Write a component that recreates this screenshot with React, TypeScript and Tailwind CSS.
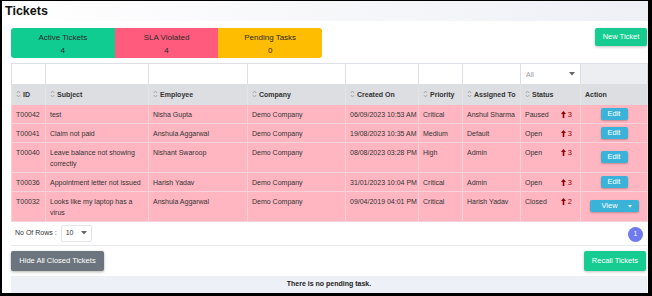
import { ReactNode } from "react";

const font = { fontFamily: '"Liberation Sans", Arial, sans-serif' };

type Row = {
  id: string;
  subject: string;
  employee: string;
  company: string;
  created: string;
  priority: string;
  assigned: string;
  status: string;
  level: number;
  view?: boolean;
};

const rows: Row[] = [
  { id: "T00042", subject: "test", employee: "Nisha Gupta", company: "Demo Company", created: "06/09/2023 10:53 AM", priority: "Critical", assigned: "Anshul Sharma", status: "Paused", level: 3 },
  { id: "T00041", subject: "Claim not paid", employee: "Anshula Aggarwal", company: "Demo Company", created: "19/08/2023 10:35 AM", priority: "Medium", assigned: "Default", status: "Open", level: 3 },
  { id: "T00040", subject: "Leave balance not showing correctly", employee: "Nishant Swaroop", company: "Demo Company", created: "08/08/2023 03:28 PM", priority: "High", assigned: "Admin", status: "Open", level: 3 },
  { id: "T00036", subject: "Appointment letter not issued", employee: "Harish Yadav", company: "Demo Company", created: "31/01/2023 10:04 PM", priority: "Critical", assigned: "Admin", status: "Open", level: 3 },
  { id: "T00032", subject: "Looks like my laptop has a virus", employee: "Anshula Aggarwal", company: "Demo Company", created: "09/04/2019 04:01 PM", priority: "Critical", assigned: "Harish Yadav", status: "Closed", level: 2, view: true },
];

const widths = [34, 103, 99, 98, 73, 44, 58, 60, 67];
const heads = ["ID", "Subject", "Employee", "Company", "Created On", "Priority", "Assigned To", "Status"];

function SortIcon() {
  return (
    <svg width="5" height="8" viewBox="0 0 5 8" className="mr-[2px] inline-block align-[-1px]">
      <path d="M0.8 3 L2.5 1 L4.2 3 M0.8 5 L2.5 7 L4.2 5" fill="none" stroke="#9a9a9a" strokeWidth="0.8" />
    </svg>
  );
}

function Caret() {
  return (
    <svg width="6" height="4" viewBox="0 0 6 4">
      <path d="M0 0 L6 0 L3 3.5 Z" fill="#666" />
    </svg>
  );
}

function UpArrow() {
  return (
    <svg width="5" height="7" viewBox="0 0 5 7" className="mr-[2px] inline-block align-[-1px]">
      <path d="M2.5 0 L5 3 L3.3 3 L3.3 7 L1.7 7 L1.7 3 L0 3 Z" fill="#8b0000" />
    </svg>
  );
}

function Td({ children, className = "" }: { children?: ReactNode; className?: string }) {
  return <td className={`border-x border-b border-[#f7d3d9] px-[4px] pt-[4px] pb-[3px] align-top ${className}`}>{children}</td>;
}

function Stat({ label, value, color }: { label: string; value: string; color: string }) {
  return (
    <div className={`flex flex-1 flex-col items-center justify-center gap-[2px] pt-[1px] ${color}`}>
      <span>{label}</span>
      <span>{value}</span>
    </div>
  );
}

export default function App() {
  return (
    <div style={font} className="h-[296px] w-[652px] overflow-hidden border-t border-l-2 border-r-4 border-b-[3px] border-black bg-white text-[#333]">
      <div className="flex h-[20px] items-center bg-gradient-to-r from-white to-[#eff0f6] pl-[3px]">
        <h1 className="text-[12.5px] font-bold leading-none text-[#111]">Tickets</h1>
      </div>
      <div className="pl-[9px] pr-[1px] pt-[7px]">
        <div className="flex items-start justify-between">
          <div className="flex h-[30px] w-[311px] overflow-hidden rounded-[3px] text-[8px] leading-[11px] text-[#2a2a2a]">
            <Stat label="Active Tickets" value="4" color="bg-[#10cc91]" />
            <Stat label="SLA Violated" value="4" color="bg-[#ff5b7c]" />
            <Stat label="Pending Tasks" value="0" color="bg-[#ffbd02]" />
          </div>
          <button className="h-[18px] w-[52px] rounded-[2px] bg-[#17cc90] text-[7.5px] text-white shadow-[0_1px_3px_rgba(0,0,0,0.25)]">New Ticket</button>
        </div>

        <table className="mt-[5px] w-[636px] table-fixed border-collapse text-[7px] leading-[11px]">
          <colgroup>
            {widths.map((w, i) => (
              <col key={i} style={{ width: w }} />
            ))}
          </colgroup>
          <thead>
            <tr className="h-[21px]">
              {widths.slice(0, 7).map((_, i) => (
                <th key={i} className="border border-[#dcdfe3] bg-white p-0" />
              ))}
              <th className="border border-[#dcdfe3] bg-white px-[5px] py-0 text-left font-normal">
                <div className="flex items-center justify-between text-[#999]">
                  <span>All</span>
                  <Caret />
                </div>
              </th>
              <th className="border border-[#dcdfe3] bg-[#eceef2] p-0" />
            </tr>
            <tr className="h-[20px] bg-[#dcdee2]">
              {heads.map((h) => (
                <th key={h} className="border-x border-[#e2e4e7] px-[4px] py-0 text-left font-bold text-[#333]">
                  <span className="whitespace-nowrap">
                    <SortIcon />
                    {h}
                  </span>
                </th>
              ))}
              <th className="border-x border-[#e2e4e7] px-[4px] py-0 text-left font-bold">Action</th>
            </tr>
          </thead>
          <tbody className="bg-[#ffb6c1]">
            {rows.map((r) => (
              <tr key={r.id}>
                <Td>{r.id}</Td>
                <Td>{r.subject}</Td>
                <Td>{r.employee}</Td>
                <Td>{r.company}</Td>
                <Td className="whitespace-nowrap">{r.created}</Td>
                <Td>{r.priority}</Td>
                <Td className="whitespace-nowrap">{r.assigned}</Td>
                <Td>
                  <span className="float-right pr-[4px] text-[7.5px] text-[#a00000]">
                    <UpArrow />
                    {r.level}
                  </span>
                  {r.status}
                </Td>
                <td className="border-x border-b border-[#f7d3d9] p-0 text-center align-middle leading-none">
                  {r.view ? (
                    <button className="inline-flex h-[12px] w-[49px] items-center justify-between rounded-[2px] bg-[#3bb3d8] pl-[12px] pr-[7px] text-[7.5px] text-white shadow-[0_1px_2px_rgba(0,0,0,0.25)]">
                      <span>View</span>
                      <svg width="4" height="3" viewBox="0 0 4 3">
                        <path d="M0 0 L4 0 L2 2.5 Z" fill="#fff" />
                      </svg>
                    </button>
                  ) : (
                    <button className="inline-block h-[12px] w-[27px] rounded-[2px] bg-[#3bb3d8] align-middle text-[7.5px] leading-[12px] text-white shadow-[0_1px_2px_rgba(0,0,0,0.25)]">Edit</button>
                  )}
                </td>
              </tr>
            ))}
          </tbody>
        </table>

        <div className="flex h-[24px] w-[636px] items-center justify-between border-b border-[#e6e8eb] pl-[4px] pr-[4px] text-[7px]">
          <div className="flex items-center">
            <span>No Of Rows :</span>
            <div className="ml-[4px] flex h-[17px] w-[31px] items-center justify-between rounded-[2px] border border-[#e3e5e8] px-[4px]">
              <span>10</span>
              <Caret />
            </div>
          </div>
          <div className="mt-[2px] flex h-[15px] w-[15px] items-center justify-center rounded-full bg-[#6f79f0] text-[7px] text-white">1</div>
        </div>

        <div className="mt-[5px] flex w-[636px] items-center justify-between pr-[1px]">
          <button className="h-[20px] w-[93px] rounded-[2px] bg-[#6c757d] text-[7.5px] text-white shadow-[0_1px_3px_rgba(0,0,0,0.3)]">Hide All Closed Tickets</button>
          <button className="h-[20px] w-[62px] rounded-[2px] bg-[#17cc90] text-[7.5px] text-white shadow-[0_1px_3px_rgba(0,0,0,0.25)]">Recall Tickets</button>
        </div>

        <div className="mt-[5px] flex h-[17px] w-[636px] items-center justify-center bg-[#eef0f7] text-[7px] font-bold text-[#222]">
          There is no pending task.
        </div>
      </div>
    </div>
  );
}
